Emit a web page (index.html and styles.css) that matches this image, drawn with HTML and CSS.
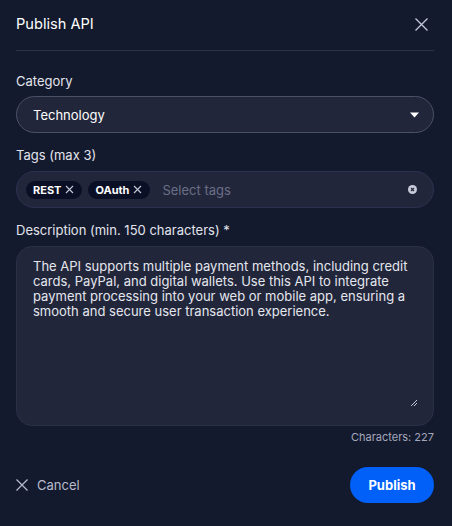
FILE: index.html
```html
<!DOCTYPE html>
<html>
<head>
<meta charset="utf-8">
<link rel="stylesheet" href="styles.css">
</head>
<body>
<div class="modal">
  <header class="head">
    <h1 class="title">Publish API</h1>
    <button class="close" aria-label="Close">
      <svg width="13" height="13" viewBox="0 0 13 13"><path d="M0.5 0.5L12.5 12.5M12.5 0.5L0.5 12.5" stroke="#c4c8d8" stroke-width="1.3" fill="none"/></svg>
    </button>
  </header>
  <div class="field first">
    <label class="label">Category</label>
    <div class="select">
      <span>Technology</span>
      <svg width="9" height="6" viewBox="0 0 9 6"><path d="M0 0.5H9L4.5 5.5Z" fill="#ffffff"/></svg>
    </div>
  </div>
  <div class="field">
    <label class="label">Tags (max 3)</label>
    <div class="tags">
      <span class="chip">REST <svg width="9" height="9" viewBox="0 0 9 9"><path d="M1 1L8 8M8 1L1 8" stroke="#c4c8d8" stroke-width="1.1"/></svg></span>
      <span class="chip">OAuth <svg width="9" height="9" viewBox="0 0 9 9"><path d="M1 1L8 8M8 1L1 8" stroke="#c4c8d8" stroke-width="1.1"/></svg></span>
      <span class="placeholder">Select tags</span>
      <svg class="clear" width="9" height="9" viewBox="0 0 10 10"><circle cx="5" cy="5" r="5" fill="#c8ccda"/><path d="M3.3 3.3L6.7 6.7M6.7 3.3L3.3 6.7" stroke="#22263b" stroke-width="1.3"/></svg>
    </div>
  </div>
  <div class="field">
    <label class="label">Description (min. 150 characters) *</label>
    <div class="textarea">
      <p>The API supports multiple payment methods, including credit cards, PayPal, and digital wallets. Use this API to integrate payment processing into your web or mobile app, ensuring a smooth and secure user transaction experience.</p>
      <svg class="grip" width="8" height="8" viewBox="0 0 8 8"><path d="M1 7L7 1M4 7L7 4" stroke="#c4c8d8" stroke-width="1"/></svg>
    </div>
    <div class="count">Characters: 227</div>
  </div>
  <footer class="foot">
    <button class="cancel">
      <svg width="12" height="12" viewBox="0 0 12 12"><path d="M0.5 0.5L11.5 11.5M11.5 0.5L0.5 11.5" stroke="#b8bccc" stroke-width="1.2"/></svg>
      <span>Cancel</span>
    </button>
    <button class="publish">Publish</button>
  </footer>
</div>
</body>
</html>
```

FILE: styles.css
```css
* { box-sizing: border-box; }
html, body { margin: 0; padding: 0; }
body {
  background: #141a2e;
  font-family: Inter, "Noto Sans", sans-serif;
  color: #e6e8f0;
  width: 452px;
  height: 526px;
}
.modal {
  padding: 0 18px 0 16px;
  display: flex;
  flex-direction: column;
}
.head {
  display: flex;
  justify-content: space-between;
  align-items: center;
  height: 51px;
  border-bottom: 1px solid #2c3149;
  padding-bottom: 2px;
}
.title {
  margin: 0;
  font-size: 14.6px;
  font-weight: 400;
  color: #ffffff;
}
.close {
  background: none;
  border: 0;
  padding: 0;
  margin-right: 6px;
  display: flex;
}
.field {
  display: flex;
  flex-direction: column;
  margin-top: 14px;
}
.field.first { margin-top: 22px; }
.label {
  font-size: 13px;
  color: #e2e4ec;
  line-height: 17px;
  margin-bottom: 7px;
}
.field.first .label { margin-bottom: 6px; }
.select {
  height: 37px;
  border: 1px solid #4a5068;
  border-radius: 19px;
  background: #22263b;
  display: flex;
  align-items: center;
  justify-content: space-between;
  padding: 0 14px 0 16px;
  font-size: 13px;
  color: #ffffff;
}
.tags {
  height: 37px;
  border: 1px solid #2c3150;
  border-radius: 19px;
  background: #22263b;
  display: flex;
  align-items: center;
  padding: 0 16px 0 9px;
  gap: 6px;
}
.chip {
  display: inline-flex;
  align-items: center;
  gap: 4px;
  height: 18px;
  padding: 0 8px 0 7px;
  border-radius: 9px;
  background: #0b0f26;
  font-size: 11px;
  font-weight: 700;
  color: #ffffff;
}
.placeholder {
  margin-left: 6px;
  font-size: 13px;
  color: #6a6f87;
  flex: 1;
}
.textarea {
  position: relative;
  height: 180px;
  border: 1px solid #2a2f48;
  border-radius: 16px;
  background: #22263b;
  padding: 12px 16px;
}
.textarea p {
  margin: 0;
  font-size: 13px;
  line-height: 15px;
  color: #e4e6ee;
}
.grip {
  position: absolute;
  right: 15px;
  bottom: 18px;
}
.count {
  text-align: right;
  font-size: 11px;
  line-height: 14px;
  color: #a4a8bc;
  margin-top: 4px;
}
.foot {
  display: flex;
  justify-content: space-between;
  align-items: center;
  margin-top: 23px;
}
.cancel {
  background: none;
  border: 0;
  padding: 0;
  display: flex;
  align-items: center;
  gap: 9px;
  font-family: inherit;
  font-size: 13px;
  color: #b8bccc;
}
.publish {
  height: 36px;
  width: 84px;
  border: 0;
  border-radius: 18px;
  background: #0060f8;
  color: #ffffff;
  font-family: inherit;
  font-size: 13px;
  font-weight: 700;
}
```
